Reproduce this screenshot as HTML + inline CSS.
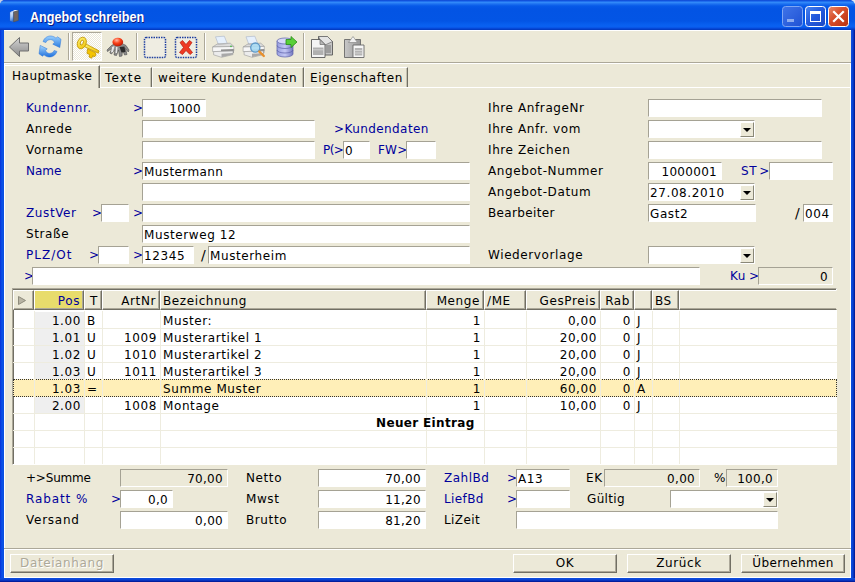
<!DOCTYPE html>
<html lang="de">
<head>
<meta charset="utf-8">
<title>Angebot schreiben</title>
<style>
html,body{margin:0;padding:0;}
body{width:855px;height:582px;overflow:hidden;background:#ECE9D8;position:relative;
 font-family:"DejaVu Sans","Liberation Sans",sans-serif;font-size:12px;color:#000;letter-spacing:0.6px;}
.a{position:absolute;white-space:nowrap;}
/* window chrome */
#titlebar{left:0;top:0;width:855px;height:30px;
 background:linear-gradient(to bottom,#0b40cc 0px,#1862ea 1px,#3088f8 2.5px,#1c70f0 4px,#0659e8 6px,#0354e4 9px,#0355e5 21px,#0860f0 25px,#0a5ff0 27px,#0548d8 28.5px,#0236b8 30px);}
#bl{left:0;top:30px;width:4px;height:552px;background:linear-gradient(to right,#0831d9,#0a52e8 50%,#0c4fe0);}
#br{left:851px;top:30px;width:4px;height:552px;background:linear-gradient(to right,#0c4fe0,#0a3fd0 50%,#00138c);}
#bb{left:0;top:578px;width:855px;height:4px;background:linear-gradient(to bottom,#0c4fe0,#0a3fd0 50%,#00138c);}
#title{left:30px;top:8px;font-family:"Liberation Sans",sans-serif;font-weight:bold;font-size:14px;color:#fff;
 text-shadow:1px 1px 0 #0a1883;letter-spacing:0;line-height:18px;transform:scaleX(0.9);transform-origin:0 0;}
.lbl{line-height:16px;height:16px;}
.b{color:#00009c;}
.in{background:#fff;box-sizing:border-box;height:18px;border-top:1px solid #a5a294;border-left:1px solid #a5a294;border-bottom:1px solid #fff;border-right:1px solid #fff;
 line-height:18px;padding:0 2px 0 1px;overflow:hidden;}
.in.r{padding-right:4px;letter-spacing:0.3px;}
.ro{background:#ECE9D8;}
.r{text-align:right;}
.cb{position:absolute;right:0;top:1px;width:14px;height:15px;background:#ECE9D8;box-sizing:border-box;border:1px solid;border-color:#fff #8a8878 #8a8878 #fff;}
.cb i{position:absolute;left:2px;top:5px;width:0;height:0;border-left:4px solid transparent;border-right:4px solid transparent;border-top:4.5px solid #000;}
.sep{top:33px;width:1px;height:27px;background:#aca899;box-shadow:1px 0 0 #fff;}
#keybtn{left:72px;top:32px;width:30px;height:29px;box-sizing:border-box;border:1px solid;border-color:#aca899 #fff #fff #aca899;
 background-color:#ECE9D8;background-image:repeating-conic-gradient(#fff 0 25%,#ece9d8 0 50%);background-size:2px 2px;}
.tab{box-sizing:border-box;border-left:1px solid #f8f7f0;border-top:1px solid #fff;border-right:1px solid #716f64;line-height:16px;letter-spacing:0.5px;box-shadow:inset -1px 0 0 #c4c1b0;}
.tab.sel{border-right:1px solid #716f64;border-left:1px solid #fff;box-shadow:inset -1px 0 0 #aca899;}
#grid{box-sizing:border-box;border:1px solid #aca899;border-right-color:#fff;border-bottom-color:#fff;background:#fff;box-shadow:inset 1px 1px 0 #716f64;}
.hd{box-sizing:border-box;height:20px;background:#ECE9D8;border:1px solid;border-color:#fff #716f64 #716f64 #fff;box-shadow:inset -1px -1px 0 #aca899;line-height:20px;padding:0 3px 0 2px;overflow:hidden;}
.hd.pos{background:#e8dc6c;color:#00009c;}
.cell{line-height:18px;height:16px;box-sizing:border-box;padding:0 3px 0 3px;overflow:hidden;}
.hl{height:1px;background:#eeecdf;}
.vl{width:1px;background:#eeecdf;}
.selrow{box-sizing:border-box;background:#ffefb8;border:1px dotted #333;}
.btn{box-sizing:border-box;height:19px;background:#ECE9D8;border:1px solid;border-color:#fff #716f64 #716f64 #fff;box-shadow:inset -1px -1px 0 #aca899;text-align:center;line-height:16px;}
.btn.dis{color:#aca899;text-shadow:1px 1px 0 #fff;}
.sl{font-size:14px;letter-spacing:0;margin-top:1px;}
.n0{letter-spacing:0;}
.n3{letter-spacing:0.35px;}
</style>
</head>
<body>
<div class="a" id="titlebar"></div>
<div class="a" id="bl"></div><div class="a" id="br"></div><div class="a" id="bb"></div>
<!--CHROME-->
<svg class="a" style="left:0;top:0" width="855" height="30" viewBox="0 0 855 30">
<defs>
<linearGradient id="wbBlue" x1="0" y1="0" x2="1" y2="1"><stop offset="0" stop-color="#4a86f0"/><stop offset="0.5" stop-color="#2258dc"/><stop offset="1" stop-color="#1c48c4"/></linearGradient>
<linearGradient id="wbDis" x1="0" y1="0" x2="1" y2="1"><stop offset="0" stop-color="#3f74e8"/><stop offset="1" stop-color="#1f52d4"/></linearGradient>
<linearGradient id="wbRed" x1="0" y1="0" x2="1" y2="1"><stop offset="0" stop-color="#e88a6c"/><stop offset="0.4" stop-color="#d8502c"/><stop offset="1" stop-color="#b83010"/></linearGradient>
<linearGradient id="icoB" x1="0" y1="0" x2="0.300" y2="1"><stop offset="0" stop-color="#f0f6ff"/><stop offset="0.600" stop-color="#a8c8f4"/><stop offset="1" stop-color="#3a7ad8"/></linearGradient>
</defs>
<!-- rounded corners -->
<path d="M0 0 L3.500 0 L1.500 1.200 L0 3.500 Z" fill="#c4cce4"/>
<path d="M855 0 L851 0 L853.500 1.500 L855 4 Z" fill="#e4e8f0"/>
<!-- title icon -->
<g>
<path d="M10 12.200 L13.600 11.200 L13.600 22 L10 20.800 Z" fill="url(#icoB)" stroke="#3a66b8" stroke-width="0.400"/>
<path d="M13.600 11.200 L18.400 10.300 L18.400 20.400 L13.600 22 Z" fill="#6c6662" stroke="#4a4644" stroke-width="0.400"/>
<path d="M10 12.200 L14.800 10 L18.400 10.300 L13.600 11.400 Z" fill="#f4f8ff"/>
<path d="M15.500 14 L16.500 13.700 L16.500 17.500 L15.500 17.800 Z" fill="#8a5a50"/>
</g>
<!-- min (disabled) -->
<rect x="782.500" y="6.500" width="20" height="20" rx="3" fill="url(#wbDis)" stroke="#7ea6f4" stroke-width="1"/>
<rect x="787" y="19" width="7" height="3" fill="#8cacf0"/>
<!-- max -->
<rect x="805.500" y="6.500" width="20" height="20" rx="3" fill="url(#wbBlue)" stroke="#fff" stroke-width="1"/>
<rect x="810.500" y="11.500" width="10" height="10" fill="none" stroke="#fff" stroke-width="1"/>
<rect x="810" y="11" width="11" height="3" fill="#fff"/>
<!-- close -->
<rect x="828.500" y="6.500" width="20" height="20" rx="3" fill="url(#wbRed)" stroke="#fff" stroke-width="1"/>
<path d="M834 12 L843 21 M843 12 L834 21" stroke="#fff" stroke-width="2.200" stroke-linecap="square"/>
</svg>
<!--/CHROME-->
<div class="a" id="title">Angebot schreiben</div>
<!--TOOLBAR-->
<div class="a" style="left:4px;top:30px;width:847px;height:1px;background:#fff"></div>
<div class="a" style="left:4px;top:62px;width:847px;height:1px;background:#aca899"></div>
<div class="a" style="left:4px;top:63px;width:847px;height:1px;background:#fff"></div>
<div class="a sep" style="left:68px"></div><div class="a sep" style="left:136px"></div><div class="a sep" style="left:204px"></div><div class="a sep" style="left:303px"></div>
<div class="a" id="keybtn"></div>
<svg class="a" style="left:4px;top:31px" width="400" height="31" viewBox="4 31 400 31">
<defs>
<linearGradient id="gGray" x1="0" y1="0" x2="0" y2="1"><stop offset="0" stop-color="#d4d4d4"/><stop offset="1" stop-color="#8a8a8a"/></linearGradient>
<linearGradient id="gBlue" x1="0" y1="0" x2="0" y2="1"><stop offset="0" stop-color="#9ad0ff"/><stop offset="1" stop-color="#2a7ce0"/></linearGradient>
<linearGradient id="gBlue2" x1="0" y1="0" x2="0" y2="1"><stop offset="0" stop-color="#a8d8ff"/><stop offset="1" stop-color="#1e70dc"/></linearGradient>
<linearGradient id="gGold" x1="0" y1="0" x2="1" y2="1"><stop offset="0" stop-color="#fff67a"/><stop offset="1" stop-color="#f0c000"/></linearGradient>
<radialGradient id="gRed" cx="0.4" cy="0.3" r="0.7"><stop offset="0" stop-color="#ffb8a4"/><stop offset="0.5" stop-color="#fa4018"/><stop offset="1" stop-color="#b81c08"/></radialGradient>
<linearGradient id="gDb" x1="0" y1="0" x2="1" y2="0"><stop offset="0" stop-color="#9aa0e0"/><stop offset="0.5" stop-color="#c4c8f4"/><stop offset="1" stop-color="#7478c0"/></linearGradient>
<linearGradient id="gClip" x1="0" y1="0" x2="1" y2="0"><stop offset="0" stop-color="#c8c8c8"/><stop offset="1" stop-color="#969696"/></linearGradient>
<linearGradient id="gPaper" x1="0" y1="0" x2="1" y2="1"><stop offset="0" stop-color="#ffffff"/><stop offset="1" stop-color="#c8c8c8"/></linearGradient>
</defs>
<!-- back arrow -->
<path d="M9.5 47 L19.5 37.5 L19.5 43 L28.5 43 L28.5 51 L19.5 51 L19.5 56.5 Z" fill="url(#gGray)" stroke="#707070" stroke-width="1"/>
<!-- refresh -->
<path d="M43 41.500 C44.500 37.500 48 35.800 51 36 C53 36.200 54.800 37 56 38.200 L57.500 36.800 L61 39.200 L59.800 47.600 L52.800 44.200 L54.600 42.200 C53.500 40.600 52 39.600 50.400 39.600 C48.400 39.600 46.800 40.600 45.800 42.600 Z" fill="url(#gBlue)" stroke="#2a74d8" stroke-width="0.500"/>
<path d="M57 51.500 C55.500 55.500 52 57.200 49 57 C47 56.800 45.200 56 44 54.800 L42.500 56.200 L39 53.800 L40.200 45.400 L47.200 48.800 L45.400 50.800 C46.500 52.400 48 53.400 49.600 53.400 C51.600 53.400 53.200 52.400 54.200 50.400 Z" fill="url(#gBlue2)" stroke="#2a74d8" stroke-width="0.500"/>
<!-- key -->
<g stroke="#c09400" stroke-width="0.800" fill="url(#gGold)" stroke-linejoin="round">
<path d="M87.500 48.800 L95.600 52.800 L95.900 55.600 L93.900 56.900 L93 55.400 L91.700 58.200 L89 57 L89.600 54.400 L87 53.500 Z" fill="#f4c400"/>
<path d="M84.600 43.300 L99 50.800 L98.400 53.200 L83.800 46.300 Z"/>
<path transform="rotate(22 81.800 43)" d="M77.500 43 A4.300 6 0 1 1 86.100 43 A4.300 6 0 1 1 77.500 43 Z M80.300 42.600 A1.400 2.600 0 1 0 83.100 42.600 A1.400 2.600 0 1 0 80.300 42.600 Z" fill-rule="evenodd"/>
</g>
<!-- bug -->
<g>
<path d="M107 50 L111.500 45.500 L115 43.500 L122 43.500 L126 45.500 L129 50 L128.300 52 L125.500 48.500 L127 54.500 L124.500 55 L122.500 49.500 L122 56 L119.500 56.500 L118.500 50 L116.500 55.500 L114 55 L115 49.500 L111.500 54 L109.800 53 L111.800 48.500 L107.500 51.500 Z" fill="#8c8c8c" stroke="#4c4c4c" stroke-width="0.600" stroke-linejoin="round"/>
<path d="M119.500 47 L124.500 46.500 L125.500 52 L121.500 52.500 Z" fill="#2c2c2c"/>
<path d="M112 47 L114.500 46 L113 52 L111 52.500 Z M116 47 L117.500 47 L117 53 L115.500 53 Z" fill="#e8e8e8"/>
<ellipse cx="117.800" cy="42" rx="5.400" ry="4.300" fill="url(#gRed)"/>
</g>
<!-- dotted square -->
<rect x="144.500" y="37.500" width="21" height="20" rx="1.500" fill="#efede2" stroke="#1c3ea0" stroke-width="1.500" stroke-dasharray="1.500 1"/>
<!-- X square -->
<rect x="175.500" y="37.500" width="21" height="20" rx="1.500" fill="#efede2" stroke="#1c3ea0" stroke-width="1.500" stroke-dasharray="1.500 1"/>
<path d="M180 42.500 L182.500 40.500 L186 44.500 L189.500 40.500 L192 42.500 L188.500 47.500 L192.500 52.500 L190 54.500 L186 50.500 L182.500 54.500 L179.500 52.500 L183.500 47.500 Z" fill="#ee3a24" stroke="#b81808" stroke-width="0.700"/>
<!-- printer -->
<g>
<path d="M215.5 36.8 L224.3 36.2 L227.4 44.0 L218.6 45.0 Z" fill="#e6f0fc" stroke="#a8b4c8" stroke-width="0.600"/>
<path d="M212.6 47.0 L217.6 43.8 L230.3 43.2 L233.8 46.4 Z" fill="#dcdcdc" stroke="#9a9a9a" stroke-width="0.600"/>
<path d="M215.5 44.6 L218.6 45.0 L227.4 44.0 L229.0 43.4 Z" fill="#b8b8b8" stroke="none"/>
<path d="M212.6 47.0 L233.8 46.4 L233.8 51.0 L212.6 51.6 Z" fill="#f6f6f6" stroke="#9a9a9a" stroke-width="0.600"/>
<path d="M221.0 49.5 L233.8 49.0 L233.8 53.0 L221.0 53.8 Z" fill="#8e8e8e" stroke="none"/>
<path d="M213.6 51.6 L233.0 51.0 L233.0 54.6 L221.5 57.3 L213.6 54.8 Z" fill="#ececec" stroke="#9a9a9a" stroke-width="0.600"/>
<path d="M221.5 53.8 L233.0 53.0 L233.0 54.6 L221.5 57.3 Z" fill="#a8a8a8" stroke="none"/>
<circle cx="231" cy="46.300" r="0.900" fill="#48b848"/>
</g>
<!-- print preview -->
<g>
<path d="M246.0 36.8 L254.8 36.2 L257.9 44.0 L249.1 45.0 Z" fill="#e6f0fc" stroke="#a8b4c8" stroke-width="0.600"/>
<path d="M243.1 47.0 L248.1 43.8 L260.8 43.2 L264.3 46.4 Z" fill="#dcdcdc" stroke="#9a9a9a" stroke-width="0.600"/>
<path d="M246.0 44.6 L249.1 45.0 L257.9 44.0 L259.5 43.4 Z" fill="#b8b8b8" stroke="none"/>
<path d="M243.1 47.0 L264.3 46.4 L264.3 51.0 L243.1 51.6 Z" fill="#f6f6f6" stroke="#9a9a9a" stroke-width="0.600"/>
<path d="M251.5 49.5 L264.3 49.0 L264.3 53.0 L251.5 53.8 Z" fill="#8e8e8e" stroke="none"/>
<path d="M244.1 51.6 L263.5 51.0 L263.5 54.6 L252.0 57.3 L244.1 54.8 Z" fill="#ececec" stroke="#9a9a9a" stroke-width="0.600"/>
<path d="M252.0 53.8 L263.5 53.0 L263.5 54.6 L252.0 57.3 Z" fill="#a8a8a8" stroke="none"/>
<circle cx="255.300" cy="47.600" r="4.600" fill="#a8dcf4" fill-opacity="0.900" stroke="#5c98c8" stroke-width="1.300"/>
<path d="M259.300 51.600 L263.800 56" stroke="#e8902c" stroke-width="2.400" stroke-linecap="round"/>
</g>
<!-- db export -->
<g>
<path d="M277 41 L277 54 A8 3 0 0 0 293 54 L293 41 Z" fill="url(#gDb)" stroke="#5a5ea8" stroke-width="0.700"/>
<ellipse cx="285" cy="41" rx="8" ry="3" fill="#d8dafa" stroke="#5a5ea8" stroke-width="0.700"/>
<path d="M277 45.500 A8 3 0 0 0 293 45.500 M277 50 A8 3 0 0 0 293 50" fill="none" stroke="#5a5ea8" stroke-width="0.700"/>
<path d="M286 39.500 L291 39.500 L291 36.500 L297 42 L291 47.500 L291 44.500 L286 44.500 Z" fill="#58d038" stroke="#2a8a18" stroke-width="0.800"/>
</g>
<!-- copy -->
<g stroke="#5a5a5a" stroke-width="0.900" stroke-linejoin="round">
<path d="M318.500 36.500 L327.500 36.500 L332.500 41.500 L332.500 55 L318.500 55 Z" fill="#c4c4c4"/>
<path d="M318.500 36.500 L327.500 36.500 L332.500 41.500 L323 46 Z" fill="#e4e4e4" stroke-width="0.600"/>
<rect x="326" y="45" width="5" height="8" fill="#9c9c9c" stroke="none"/>
<path d="M311.500 39.500 L320 39.500 L325 44.500 L325 57.500 L311.500 57.500 Z" fill="#f4f4f4"/>
<path d="M320 39.500 L320 44.500 L325 44.500 Z" fill="#b8b8b8" stroke-width="0.600"/>
<rect x="313" y="47.500" width="10.500" height="7.500" fill="#b0b0b0" stroke="none"/>
<path d="M313 49.800 L323.500 49.800" stroke="#d8d8d8" stroke-width="0.800"/>
</g>
<!-- paste -->
<g stroke="#6a6a6a" stroke-width="0.900" stroke-linejoin="round">
<rect x="344.500" y="39.500" width="16" height="18" fill="url(#gClip)"/>
<path d="M348.500 42.500 L351.500 38.500 L353 36.500 L354.500 38.500 L357.500 42.500 Z" fill="#f0f0f0" stroke="#8a8a8a" stroke-width="0.700"/>
<rect x="353" y="45" width="11" height="12.500" fill="#f6f6f6"/>
<rect x="354.800" y="48" width="7.500" height="7.500" fill="#b4b4b4" stroke="none"/>
<path d="M354.800 50.500 L362.300 50.500 M354.800 53 L362.300 53" stroke="#dcdcdc" stroke-width="0.800"/>
</g>
</svg>
<!--/TOOLBAR-->
<!--FRAME-->
<div class="a" style="left:4px;top:64px;width:1px;height:514px;background:#fff"></div>
<div class="a" style="left:850px;top:64px;width:1px;height:514px;background:#fff"></div>
<div class="a" style="left:4px;top:577px;width:847px;height:1px;background:#fff"></div>
<div class="a" style="left:100px;top:87px;width:750px;height:1px;background:#fff"></div>
<!--TABS-->
<div class="a tab sel" style="left:4px;top:65px;width:96px;height:23px;"><span style="left:7px;top:2px" class="a">Hauptmaske</span></div>
<div class="a tab" style="left:100px;top:67px;width:52px;height:20px;"><span style="left:4px;top:2px;letter-spacing:1.1px" class="a">Texte</span></div>
<div class="a tab" style="left:152px;top:67px;width:152px;height:20px;"><span style="left:5px;top:2px;letter-spacing:0.58px" class="a">weitere Kundendaten</span></div>
<div class="a tab" style="left:304px;top:67px;width:104px;height:20px;"><span style="left:5px;top:2px;letter-spacing:0.6px" class="a">Eigenschaften</span></div>
<!--/TABS-->
<!--FORM-->
<div class="a lbl b" style="left:26px;top:100px">Kundennr.</div>
<div class="a lbl b" style="left:133px;top:100px">&gt;</div>
<div class="a in r" style="left:142px;top:99px;width:64px">1000</div>
<div class="a lbl" style="left:26px;top:121px">Anrede</div>
<div class="a in " style="left:142px;top:120px;width:173px"></div>
<div class="a lbl b n3" style="left:334px;top:121px;letter-spacing:0.42px">&gt;Kundendaten</div>
<div class="a lbl" style="left:26px;top:142px">Vorname</div>
<div class="a in " style="left:142px;top:141px;width:173px"></div>
<div class="a lbl b" style="left:323px;top:142px;letter-spacing:-0.6px">P(&gt;</div>
<div class="a in " style="left:343px;top:141px;width:27px">0</div>
<div class="a lbl b" style="left:378px;top:142px;letter-spacing:0.2px">FW&gt;</div>
<div class="a in " style="left:406px;top:141px;width:30px"></div>
<div class="a lbl b n0" style="left:26px;top:163px">Name</div>
<div class="a lbl b" style="left:133px;top:163px">&gt;</div>
<div class="a in " style="left:142px;top:162px;width:328px;letter-spacing:0.4px">Mustermann</div>
<div class="a in " style="left:142px;top:183px;width:328px"></div>
<div class="a lbl b" style="left:26px;top:205px">ZustVer</div>
<div class="a lbl b" style="left:92px;top:205px">&gt;</div>
<div class="a in " style="left:101px;top:204px;width:28px"></div>
<div class="a lbl b" style="left:133px;top:205px">&gt;</div>
<div class="a in " style="left:142px;top:204px;width:328px"></div>
<div class="a lbl" style="left:26px;top:226px">Straße</div>
<div class="a in " style="left:142px;top:225px;width:328px">Musterweg 12</div>
<div class="a lbl b" style="left:26px;top:247px;letter-spacing:1px">PLZ/Ot</div>
<div class="a lbl b" style="left:89px;top:247px">&gt;</div>
<div class="a in " style="left:98px;top:246px;width:31px"></div>
<div class="a lbl b" style="left:133px;top:247px">&gt;</div>
<div class="a in " style="left:142px;top:246px;width:52px">12345</div>
<div class="a lbl sl" style="left:201px;top:246px">/</div>
<div class="a in " style="left:208px;top:246px;width:262px">Musterheim</div>
<div class="a lbl b" style="left:24px;top:268px">&gt;</div>
<div class="a in " style="left:32px;top:267px;width:668px"></div>
<div class="a lbl" style="left:488px;top:100px">Ihre AnfrageNr</div>
<div class="a in " style="left:648px;top:99px;width:174px"></div>
<div class="a lbl" style="left:488px;top:121px">Ihre Anfr. vom</div>
<div class="a in" style="left:648px;top:120px;width:107px"><span class="cb"><i></i></span></div>
<div class="a lbl" style="left:488px;top:142px">Ihre Zeichen</div>
<div class="a in " style="left:648px;top:141px;width:174px"></div>
<div class="a lbl" style="left:488px;top:163px">Angebot-Nummer</div>
<div class="a in r" style="left:648px;top:162px;width:74px">1000001</div>
<div class="a lbl b" style="left:741px;top:163px">ST<span style="margin-left:2px">&gt;</span></div>
<div class="a in " style="left:769px;top:162px;width:64px"></div>
<div class="a lbl" style="left:488px;top:184px">Angebot-Datum</div>
<div class="a in" style="left:648px;top:183px;width:107px">27.08.2010<span class="cb"><i></i></span></div>
<div class="a lbl n3" style="left:488px;top:205px">Bearbeiter</div>
<div class="a in " style="left:648px;top:204px;width:108px">Gast2</div>
<div class="a lbl sl" style="left:795px;top:204px">/</div>
<div class="a in " style="left:803px;top:204px;width:30px">004</div>
<div class="a lbl" style="left:488px;top:247px">Wiedervorlage</div>
<div class="a in" style="left:648px;top:246px;width:107px"><span class="cb"><i></i></span></div>
<div class="a lbl b" style="left:730px;top:268px">Ku<span style="margin-left:3px">&gt;</span></div>
<div class="a in ro r" style="left:758px;top:267px;width:75px">0</div>
<!--/FORM-->
<!--GRID-->
<div class="a" id="grid" style="left:12px;top:288px;width:825px;height:177px"></div>
<div class="a hd " style="left:13px;top:290px;width:21px"><svg width="12" height="13" style="position:absolute;left:3px;top:4px"><path d="M1.500 1.500 L8.500 5.500 L1.500 9.500 Z" fill="#b8b4a4" stroke="#8e8b7c" stroke-width="1"/></svg></div>
<div class="a hd pos r" style="left:34px;top:290px;width:50px">Pos</div>
<div class="a hd " style="left:84px;top:290px;width:18px;padding-left:5px">T</div>
<div class="a hd r" style="left:102px;top:290px;width:58px">ArtNr</div>
<div class="a hd " style="left:160px;top:290px;width:266px">Bezeichnung</div>
<div class="a hd r" style="left:426px;top:290px;width:58px">Menge</div>
<div class="a hd " style="left:484px;top:290px;width:42px">/ME</div>
<div class="a hd r" style="left:526px;top:290px;width:74px">GesPreis</div>
<div class="a hd r" style="left:600px;top:290px;width:34px">Rab</div>
<div class="a hd " style="left:634px;top:290px;width:18px"></div>
<div class="a hd " style="left:652px;top:290px;width:27px">BS</div>
<div class="a hd " style="left:679px;top:290px;width:158px;border-right-color:#ECE9D8;box-shadow:inset 0 -1px 0 #aca899"></div>
<div class="a" style="left:34px;top:312px;width:50px;height:16px;background:#efefef"></div>
<div class="a hl" style="left:13px;top:328px;width:824px"></div>
<div class="a cell r" style="left:34px;top:312px;width:50px">1.00</div>
<div class="a cell " style="left:84px;top:312px;width:18px">B</div>
<div class="a cell " style="left:160px;top:312px;width:266px">Muster:</div>
<div class="a cell r" style="left:426px;top:312px;width:58px">1</div>
<div class="a cell r" style="left:526px;top:312px;width:74px">0,00</div>
<div class="a cell r" style="left:600px;top:312px;width:34px">0</div>
<div class="a cell " style="left:634px;top:312px;width:18px">J</div>
<div class="a" style="left:34px;top:329px;width:50px;height:16px;background:#efefef"></div>
<div class="a hl" style="left:13px;top:345px;width:824px"></div>
<div class="a cell r" style="left:34px;top:329px;width:50px">1.01</div>
<div class="a cell " style="left:84px;top:329px;width:18px">U</div>
<div class="a cell r" style="left:102px;top:329px;width:58px">1009</div>
<div class="a cell " style="left:160px;top:329px;width:266px">Musterartikel 1</div>
<div class="a cell r" style="left:426px;top:329px;width:58px">1</div>
<div class="a cell r" style="left:526px;top:329px;width:74px">20,00</div>
<div class="a cell r" style="left:600px;top:329px;width:34px">0</div>
<div class="a cell " style="left:634px;top:329px;width:18px">J</div>
<div class="a" style="left:34px;top:346px;width:50px;height:16px;background:#efefef"></div>
<div class="a hl" style="left:13px;top:362px;width:824px"></div>
<div class="a cell r" style="left:34px;top:346px;width:50px">1.02</div>
<div class="a cell " style="left:84px;top:346px;width:18px">U</div>
<div class="a cell r" style="left:102px;top:346px;width:58px">1010</div>
<div class="a cell " style="left:160px;top:346px;width:266px">Musterartikel 2</div>
<div class="a cell r" style="left:426px;top:346px;width:58px">1</div>
<div class="a cell r" style="left:526px;top:346px;width:74px">20,00</div>
<div class="a cell r" style="left:600px;top:346px;width:34px">0</div>
<div class="a cell " style="left:634px;top:346px;width:18px">J</div>
<div class="a" style="left:34px;top:363px;width:50px;height:16px;background:#efefef"></div>
<div class="a hl" style="left:13px;top:379px;width:824px"></div>
<div class="a cell r" style="left:34px;top:363px;width:50px">1.03</div>
<div class="a cell " style="left:84px;top:363px;width:18px">U</div>
<div class="a cell r" style="left:102px;top:363px;width:58px">1011</div>
<div class="a cell " style="left:160px;top:363px;width:266px">Musterartikel 3</div>
<div class="a cell r" style="left:426px;top:363px;width:58px">1</div>
<div class="a cell r" style="left:526px;top:363px;width:74px">20,00</div>
<div class="a cell r" style="left:600px;top:363px;width:34px">0</div>
<div class="a cell " style="left:634px;top:363px;width:18px">J</div>
<div class="a selrow" style="left:13px;top:379px;width:824px;height:18px"></div>
<div class="a cell r" style="left:34px;top:380px;width:50px">1.03</div>
<div class="a cell " style="left:84px;top:380px;width:18px">=</div>
<div class="a cell " style="left:160px;top:380px;width:266px">Summe Muster</div>
<div class="a cell r" style="left:426px;top:380px;width:58px">1</div>
<div class="a cell r" style="left:526px;top:380px;width:74px">60,00</div>
<div class="a cell r" style="left:600px;top:380px;width:34px">0</div>
<div class="a cell " style="left:634px;top:380px;width:18px">A</div>
<div class="a" style="left:34px;top:397px;width:50px;height:16px;background:#efefef"></div>
<div class="a hl" style="left:13px;top:413px;width:824px"></div>
<div class="a cell r" style="left:34px;top:397px;width:50px">2.00</div>
<div class="a cell r" style="left:102px;top:397px;width:58px">1008</div>
<div class="a cell " style="left:160px;top:397px;width:266px">Montage</div>
<div class="a cell r" style="left:426px;top:397px;width:58px">1</div>
<div class="a cell r" style="left:526px;top:397px;width:74px">10,00</div>
<div class="a cell r" style="left:600px;top:397px;width:34px">0</div>
<div class="a cell " style="left:634px;top:397px;width:18px">J</div>
<div class="a hl" style="left:13px;top:430px;width:824px"></div>
<div class="a hl" style="left:13px;top:447px;width:824px"></div>
<div class="a vl" style="left:34px;top:311px;height:153px"></div>
<div class="a vl" style="left:84px;top:311px;height:153px"></div>
<div class="a vl" style="left:102px;top:311px;height:153px"></div>
<div class="a vl" style="left:160px;top:311px;height:153px"></div>
<div class="a vl" style="left:426px;top:311px;height:153px"></div>
<div class="a vl" style="left:484px;top:311px;height:153px"></div>
<div class="a vl" style="left:526px;top:311px;height:153px"></div>
<div class="a vl" style="left:600px;top:311px;height:153px"></div>
<div class="a vl" style="left:634px;top:311px;height:153px"></div>
<div class="a vl" style="left:652px;top:311px;height:153px"></div>
<div class="a vl" style="left:679px;top:311px;height:153px"></div>
<div class="a" style="left:376px;top:415px;font-weight:bold;line-height:16px;font-size:12px;letter-spacing:0.35px" id="neu">Neuer Eintrag</div>
<!--/GRID-->
<!--BOTTOM-->
<div class="a lbl" style="left:26px;top:470px;letter-spacing:-0.2px">+&gt;Summe</div>
<div class="a in ro r" style="left:120px;top:469px;width:108px">70,00</div>
<div class="a lbl b" style="left:26px;top:491px;letter-spacing:0.9px">Rabatt %</div>
<div class="a lbl b" style="left:111px;top:491px">&gt;</div>
<div class="a in r" style="left:120px;top:490px;width:53px">0,0</div>
<div class="a lbl" style="left:26px;top:512px;letter-spacing:0.75px">Versand</div>
<div class="a in r" style="left:120px;top:511px;width:108px">0,00</div>
<div class="a lbl" style="left:246px;top:470px">Netto</div>
<div class="a in r" style="left:318px;top:469px;width:108px">70,00</div>
<div class="a lbl" style="left:246px;top:491px">Mwst</div>
<div class="a in r" style="left:318px;top:490px;width:108px">11,20</div>
<div class="a lbl" style="left:246px;top:512px">Brutto</div>
<div class="a in r" style="left:318px;top:511px;width:108px">81,20</div>
<div class="a lbl b" style="left:444px;top:470px;letter-spacing:0.5px">ZahlBd</div>
<div class="a lbl b" style="left:507px;top:470px">&gt;</div>
<div class="a in " style="left:516px;top:469px;width:54px">A13</div>
<div class="a lbl b" style="left:444px;top:491px;letter-spacing:0.4px">LiefBd</div>
<div class="a lbl b" style="left:507px;top:491px">&gt;</div>
<div class="a in " style="left:516px;top:490px;width:54px"></div>
<div class="a lbl" style="left:444px;top:512px;letter-spacing:0.4px">LiZeit</div>
<div class="a in " style="left:516px;top:511px;width:262px"></div>
<div class="a lbl" style="left:586px;top:470px">EK</div>
<div class="a in ro r" style="left:604px;top:469px;width:96px">0,00</div>
<div class="a lbl" style="left:714px;top:470px">%</div>
<div class="a in ro r" style="left:726px;top:469px;width:52px">100,0</div>
<div class="a lbl" style="left:587px;top:491px;letter-spacing:0.35px">Gültig</div>
<div class="a in" style="left:670px;top:490px;width:108px"><span class="cb"><i></i></span></div>
<div class="a" style="left:4px;top:548px;width:847px;height:1px;background:#aca899"></div><div class="a" style="left:4px;top:549px;width:847px;height:1px;background:#fff"></div>
<div class="a btn dis" style="left:10px;top:554px;width:104px">Dateianhang</div>
<div class="a btn" style="left:513px;top:554px;width:104px">OK</div>
<div class="a btn" style="left:627px;top:554px;width:104px">Zurück</div>
<div class="a btn" style="left:741px;top:554px;width:104px;letter-spacing:0.35px">Übernehmen</div>
<!--/BOTTOM-->
</body>
</html>
